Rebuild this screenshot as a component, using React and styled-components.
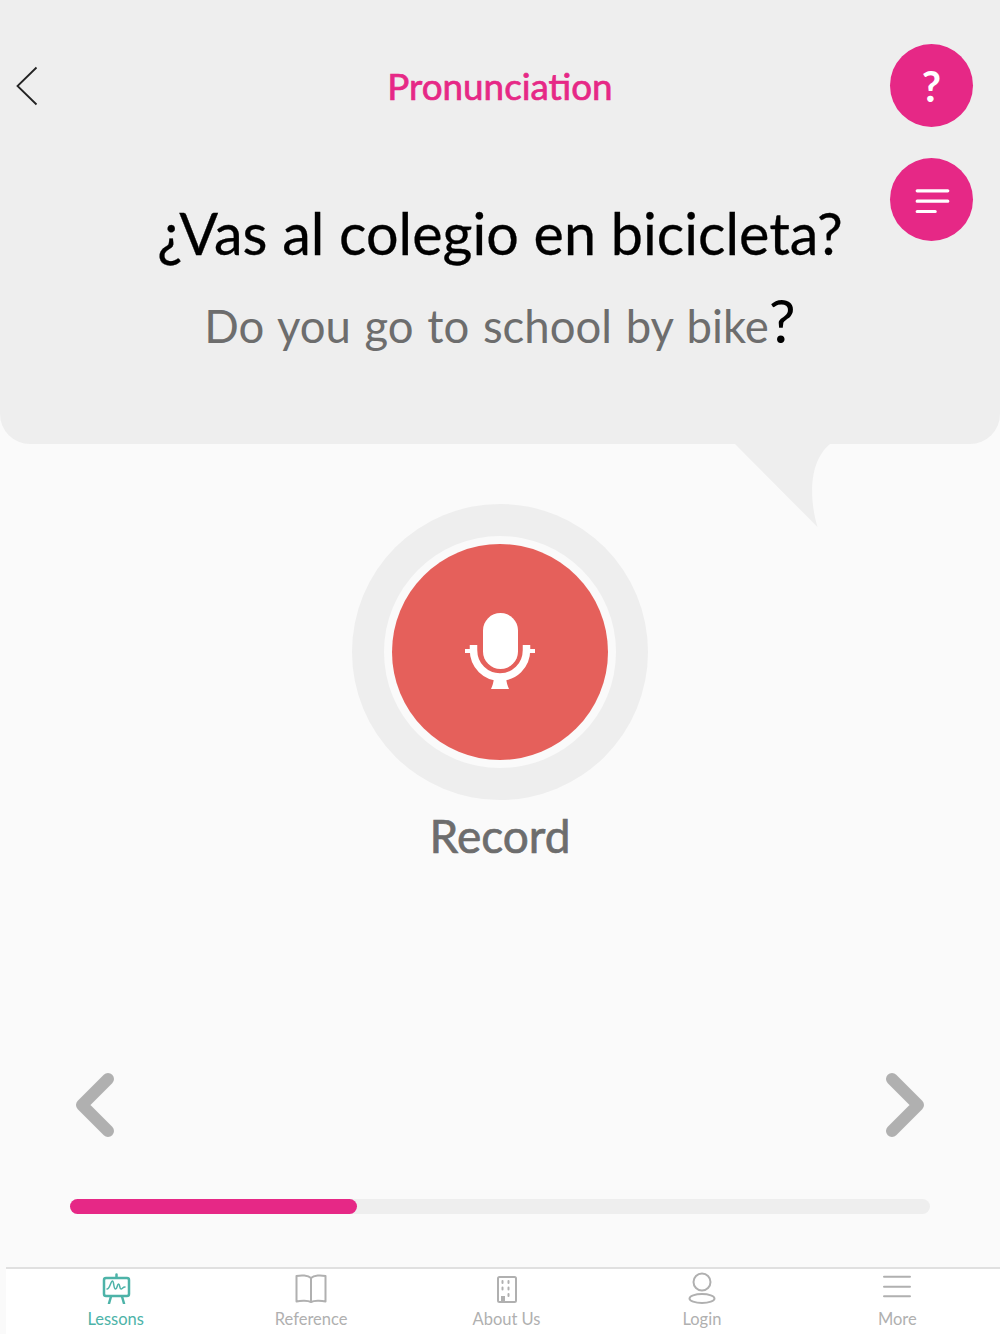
import React from "react";
import styled, { createGlobalStyle } from "styled-components";

const Global = createGlobalStyle`
  html, body { margin: 0; padding: 0; background: #fafafa; }
  * { box-sizing: border-box; }
  body { font-family: Lato, "Open Sans", sans-serif; }
`;

const Page = styled.div`
  width: 1000px;
  height: 1334px;
  background: #fafafa;
  display: flex;
  flex-direction: column;
  overflow: hidden;
`;

const Bubble = styled.header`
  position: relative;
  height: 444px;
  flex: none;
  background: #eeeeee;
  border-radius: 0 0 30px 30px;
  padding-top: 60px;
  display: flex;
  flex-direction: column;
  align-items: center;
`;

const BackLink = styled.button`
  position: absolute;
  left: 15px;
  top: 65px;
  width: 24px;
  height: 42px;
  padding: 0;
  border: 0;
  background: none;
  display: block;
`;

const Title = styled.h1`
  margin: 0;
  font-size: 36.800px;
  line-height: 52px;
  font-weight: 400;
  color: #e62886;
  -webkit-text-stroke: 0.7px #e62886;
`;

const FabStack = styled.div`
  position: absolute;
  right: 27px;
  top: 44px;
  display: flex;
  flex-direction: column;
  gap: 31px;
`;

const Fab = styled.button`
  width: 83px;
  height: 83px;
  padding: 0;
  border: 0;
  border-radius: 50%;
  background: #e62886;
  color: #fff;
  font-family: Lato, sans-serif;
  font-size: 42px;
  font-weight: 700;
  display: flex;
  align-items: center;
  justify-content: center;
`;

const Phrase = styled.h2`
  margin: 85px 0 0;
  font-size: 57.500px;
  line-height: 72px;
  font-weight: 400;
  color: #000;
  white-space: nowrap;
  -webkit-text-stroke: 0.3px #000;
`;

const Translation = styled.p`
  margin: 27px 0 0;
  font-size: 45.500px;
  line-height: 60px;
  font-weight: 400;
  word-spacing: 2px;
  color: #6d6d6d;
  white-space: nowrap;
`;

const Mark = styled.span`
  color: #000;
  font-size: 60px;
  line-height: 48px;
`;

const Tail = styled.svg`
  position: absolute;
  left: 730px;
  top: 442px;
`;

const RecordSection = styled.section`
  margin-top: 60px;
  display: flex;
  flex-direction: column;
  align-items: center;
`;

const Ring = styled.div`
  width: 296px;
  height: 296px;
  border-radius: 50%;
  background: #eeeeee;
  display: flex;
  align-items: center;
  justify-content: center;
`;

const Halo = styled.div`
  width: 232px;
  height: 232px;
  border-radius: 50%;
  background: #fafafa;
  display: flex;
  align-items: center;
  justify-content: center;
`;

const RecordButton = styled.button`
  width: 216px;
  height: 216px;
  padding: 0;
  border: 0;
  border-radius: 50%;
  background: #e5605b;
  display: flex;
  align-items: center;
  justify-content: center;
`;

const RecordLabel = styled.div`
  margin-top: 7px;
  font-size: 46px;
  line-height: 58px;
  font-weight: 400;
  color: #6d6d6d;
  -webkit-text-stroke: 0.7px #6d6d6d;
`;

const Pager = styled.div`
  margin-top: 207px;
  padding: 0 72px 0 72px;
  display: flex;
  justify-content: space-between;
`;

const PagerArrow = styled.svg`
  display: block;
`;

const Track = styled.div`
  margin: 61px 70px 0;
  height: 15px;
  border-radius: 8px;
  background: #eeeeee;
`;

const Fill = styled.div`
  height: 100%;
  border-radius: 8px;
  background: #e62886;
`;

const TabBar = styled.nav`
  margin-top: auto;
  height: 67px;
  margin-left: 6px;
  padding: 0 5px 0 12px;
  background: #fff;
  border-top: 2px solid #e0e0e0;
  display: grid;
  grid-template-columns: repeat(5, 1fr);
`;

const Tab = styled.a`
  display: flex;
  flex-direction: column;
  align-items: center;
  padding-top: 3px;
  color: ${(p) => (p.$active ? "#4db3a8" : "#b0b0b0")};
  font-size: 16.500px;
  line-height: 20px;
`;

const TabIcon = styled.svg`
  display: block;
  margin-bottom: 5px;
`;

const iconProps = {
  width: 34,
  height: 32,
  viewBox: "0 0 34 32",
  fill: "none",
  stroke: "currentColor",
  strokeWidth: 2,
  strokeLinecap: "round",
  strokeLinejoin: "round",
};

export default function App() {
  return (
    <Page>
      <Global />
      <Bubble>
        <BackLink aria-label="Back">
          <svg width="24" height="42" viewBox="0 0 24 42" fill="none" stroke="#222" strokeWidth="1.8">
            <path d="M21.5 2.5 2.5 21l19 18.5" />
          </svg>
        </BackLink>
        <Title>Pronunciation</Title>
        <FabStack>
          <Fab aria-label="Help">?</Fab>
          <Fab aria-label="Menu">
            <svg width="36" height="28" viewBox="0 0 36 28" fill="none" stroke="#fff" strokeWidth="3.200" strokeLinecap="round">
              <path d="M3.200 4.800h30.600M3.200 15.200h30.600M3.200 25.500h18" />
            </svg>
          </Fab>
        </FabStack>
        <Phrase>¿Vas al colegio en bicicleta?</Phrase>
        <Translation>
          Do you go to school by bike<Mark>?</Mark>
        </Translation>
        <Tail width="100" height="90" viewBox="0 0 100 90" aria-hidden="true">
          <path d="M4 0 5 2 87.500 85C81 64 76 22 100 2V0Z" fill="#eeeeee" />
        </Tail>
      </Bubble>

      <RecordSection>
        <Ring>
          <Halo>
            <RecordButton aria-label="Record">
              <svg width="72" height="80" viewBox="0 0 72 80" fill="#fff">
                <rect x="19" y="1" width="35" height="56" rx="17.500" />
                <path d="M9.500 33V38C9.500 54 22 65 36 65S62.500 54 62.500 38V33" fill="none" stroke="#fff" strokeWidth="7.500" />
                <rect x="1" y="37" width="12" height="4" />
                <rect x="59" y="37" width="12" height="4" />
                <path d="M30 66h12c.5 4 1.500 8 3 11H27c1.500-3 2.500-7 3-11Z" />
              </svg>
            </RecordButton>
          </Halo>
        </Ring>
        <RecordLabel>Record</RecordLabel>
      </RecordSection>

      <Pager>
        <PagerArrow width="44" height="66" viewBox="0 0 44 66" fill="none" stroke="#b0b0b0" strokeWidth="12" strokeLinecap="round" strokeLinejoin="round">
          <path d="M36 7 10 33l26 26" />
        </PagerArrow>
        <PagerArrow width="44" height="66" viewBox="0 0 44 66" fill="none" stroke="#b0b0b0" strokeWidth="12" strokeLinecap="round" strokeLinejoin="round">
          <path d="M8 7l26 26L8 59" />
        </PagerArrow>
      </Pager>

      <Track>
        <Fill style={{ width: `${(287 / 860) * 100}%` }} />
      </Track>

      <TabBar>
        <Tab $active>
          <TabIcon {...iconProps} strokeWidth="2.500">
            <rect x="5" y="6" width="25" height="18" rx="2" />
            <path d="M17.500 2.500v3M12 24.500l-2 7M23 24.500l2 7" />
            <path d="M8 17c3 0 3.500-8 5.500-8 1.500 0 1 8 3 8s1.500-5 3-5 1 5 2.500 5 1.500-2 4-2" strokeWidth="1.500" />
          </TabIcon>
          Lessons
        </Tab>
        <Tab>
          <TabIcon {...iconProps}>
            <path d="M17 6C14 3 7 3 2.500 4v25.500C7 28.500 14 28.500 17 30c3-1.500 10-1.500 14.500-.5V4C27 3 20 3 17 6ZM17 6v24" />
          </TabIcon>
          Reference
        </Tab>
        <Tab>
          <TabIcon {...iconProps}>
            <rect x="9" y="5" width="18" height="25" rx="1.500" />
            <path d="M13.500 9v2M19.500 9v2M13.500 15.500v2M19.500 15.500v2M19.500 22v2" />
            <rect x="12" y="24" width="4" height="6" fill="currentColor" stroke="none" />
          </TabIcon>
          About Us
        </Tab>
        <Tab>
          <TabIcon {...iconProps}>
            <circle cx="17" cy="10" r="8.500" />
            <ellipse cx="17" cy="26.500" rx="12.500" ry="4.500" />
          </TabIcon>
          Login
        </Tab>
        <Tab>
          <TabIcon {...iconProps}>
            <path d="M4 4.700h26M4 14.700h26M4 24.300h26" />
          </TabIcon>
          More
        </Tab>
      </TabBar>
    </Page>
  );
}
